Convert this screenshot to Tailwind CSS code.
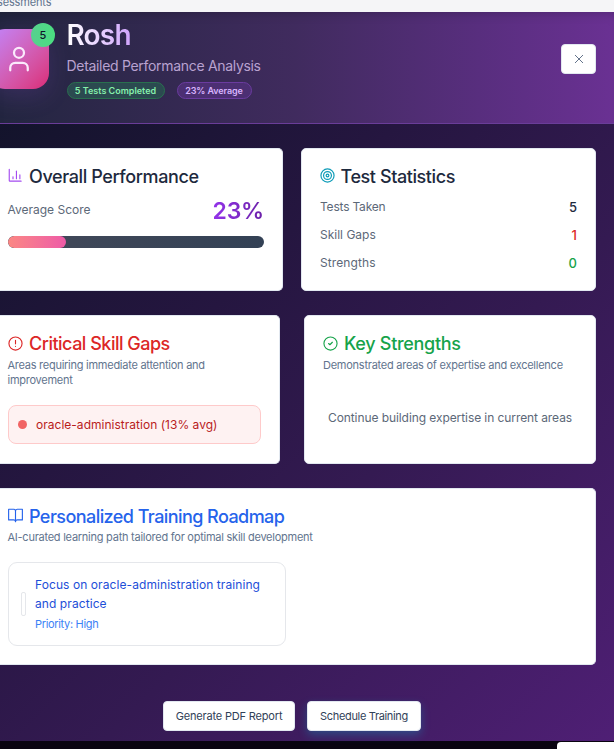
<!DOCTYPE html>
<html lang="en">
<head>
<meta charset="utf-8">
<title>Assessments</title>
<script src="https://cdn.jsdelivr.net/npm/@tailwindcss/browser@4"></script>
</head>
<body class="h-[749px] w-[614px] overflow-hidden bg-[#090410] font-['Inter','Liberation_Sans',sans-serif] whitespace-nowrap">
<div class="h-3 overflow-hidden bg-[#f5f5f7]"><p class="-ml-[3px] -mt-[6px] text-[11px] leading-4 tracking-[-0.15px] text-slate-500">sessments</p></div>
<main class="h-[729px] bg-[linear-gradient(135deg,#0e1326_0%,#251640_38%,#341a52_62%,#4f1f75_100%)]">
  <header class="flex h-28 border-b border-[#6a3d99] bg-[linear-gradient(90deg,#232640_0%,#402b5e_48%,#582e7e_78%,#6a3193_100%)] pr-[18px] shadow-[inset_0_8px_12px_-8px_rgba(0,0,0,0.25)]">
    <div class="relative mt-[17px] -ml-[11px] flex h-[60px] w-[60px] items-center justify-center rounded-2xl bg-gradient-to-br from-[#c084fc] to-[#db2777] shadow-[0_8px_24px_rgba(168,85,247,0.15)]">
      <svg class="-mt-px h-[30px] w-[30px]" viewBox="0 0 24 24" fill="none" stroke="#fbeafc" stroke-width="1.8" stroke-linecap="round" stroke-linejoin="round"><path d="M19 21v-2a4 4 0 0 0-4-4H9a4 4 0 0 0-4 4v2"/><circle cx="12" cy="7" r="4"/></svg>
      <span class="absolute -top-[6px] -right-[6px] flex h-6 w-6 items-center justify-center rounded-full bg-gradient-to-r from-[#57d08f] to-[#4ade80] text-[11px] font-medium text-slate-900">5</span>
    </div>
    <div class="ml-[17.5px] pt-[6px]">
      <h1 class="w-fit bg-gradient-to-r from-white to-[#d0a4fb] bg-clip-text text-[28px] leading-[34px] font-semibold tracking-[-0.8px] text-transparent">Rosh</h1>
      <p class="mt-[5px] text-[14px] leading-[18px] tracking-[-0.31px] text-[#b9a2d0]">Detailed Performance Analysis</p>
      <div class="mt-[7px] flex gap-3 text-[9px] font-semibold">
        <span class="flex h-[17px] w-[98px] items-center justify-center rounded-full border border-[#29704f] bg-[#2b4a50] text-[#86efac]">5 Tests Completed</span>
        <span class="flex h-[17px] w-[75px] items-center justify-center rounded-full border border-[#6b3ba0] bg-[#4c2f73] tracking-[-0.1px] text-[#d8b4fe]">23% Average</span>
      </div>
    </div>
    <button class="mt-8 ml-auto flex h-[30px] w-[35px] items-center justify-center rounded-[4px] border border-slate-200 bg-white"><svg class="h-3 w-3" viewBox="0 0 12 12" fill="none" stroke="#64748b" stroke-width="1"><path d="m2 2 8 8M10 2l-8 8"/></svg></button>
  </header>

  <div class="flex flex-col gap-6 pt-6 pr-[18px]">
    <div class="flex h-[143px] justify-between">
      <section class="w-[283px] rounded-r-[5px] border border-l-0 border-slate-200 bg-white pt-[17px] pr-[18px] pl-2">
        <h2 class="flex items-center gap-[6px] text-[18px] leading-[22px] font-medium tracking-[-0.39px] text-slate-800"><svg class="-mt-[3px] h-[15px] w-[15px] shrink-0" viewBox="0 0 24 24" fill="none" stroke="#a44bf0" stroke-width="1.8" stroke-linecap="round" stroke-linejoin="round"><path d="M2 2v18a1 1 0 0 0 1 1h18"/><path d="M19 17v-6"/><path d="M13.5 17V5"/><path d="M8 17v-3"/></svg>Overall Performance</h2>
        <div class="mt-[8px] flex h-[30px] items-center justify-between"><span class="-ml-[0.5px] -mt-[3px] text-[12px] text-[#5c6878]">Average Score</span><span class="mt-px bg-gradient-to-r from-[#9333ea] to-[#6b21a8] bg-clip-text text-[23px] font-semibold tracking-[-0.2px] text-transparent">23%</span></div>
        <div class="mt-[10px] h-3 overflow-hidden rounded-full bg-gradient-to-r from-[#434959] to-[#334155]"><div class="h-full rounded-full bg-gradient-to-r from-[#fb8783] to-[#ee5aa6]" style="width:22.6%"></div></div>
      </section>
      <section class="w-[295px] rounded-[5px] border border-slate-200 bg-white px-[18px] pt-[17px]">
        <h2 class="flex items-center gap-[5.5px] text-[18px] leading-[22px] font-medium tracking-[-0.42px] text-slate-800"><svg class="-mt-[3px] h-[15px] w-[15px] shrink-0" viewBox="0 0 24 24" fill="none" stroke="#0e9cb8" stroke-width="1.9"><circle cx="12" cy="12" r="10.5"/><circle cx="12" cy="12" r="6.3"/><circle cx="12" cy="12" r="2.2"/></svg>Test Statistics</h2>
        <dl class="mt-[10px] flex flex-col gap-[10px] text-[12px] leading-[18px] text-[#5c6878]">
          <div class="flex justify-between"><dt class="tracking-[-0.2px]">Tests Taken</dt><dd class="text-[13px] font-medium text-slate-800">5</dd></div>
          <div class="flex justify-between"><dt>Skill Gaps</dt><dd class="text-[13px] font-medium text-[#dc2626]">1</dd></div>
          <div class="flex justify-between"><dt class="tracking-[0.1px]">Strengths</dt><dd class="text-[13px] font-medium text-[#16a34a]">0</dd></div>
        </dl>
      </section>
    </div>

    <div class="flex h-[149px] justify-between">
      <section class="w-[280px] rounded-r-[5px] border border-l-0 border-slate-200 bg-white pt-[17px] pr-[18px] pl-2">
        <h2 class="flex items-center gap-[6px] text-[18px] leading-[22px] font-medium tracking-[-0.5px] text-[#dc2626]"><svg class="-mt-px h-[15px] w-[15px] shrink-0" viewBox="0 0 24 24" fill="none" stroke="currentColor" stroke-width="1.8" stroke-linecap="round"><circle cx="12" cy="12" r="10.5"/><path d="M12 7v5.5M12 16.5h.01"/></svg>Critical Skill Gaps</h2>
        <p class="-ml-[0.5px] mt-[3px] text-[11px] leading-[15px] tracking-[-0.26px] text-slate-500">Areas requiring immediate attention and<br>improvement</p>
        <div class="mt-[17px] flex h-[39px] items-center gap-[9px] rounded-lg border border-[#fecaca] bg-[#fef2f2] pl-[9px]"><i class="h-[9px] w-[9px] rounded-full bg-[#f16464]"></i><span class="text-[12px] tracking-[0.02px] text-[#b91c1c]">oracle-administration (13% avg)</span></div>
      </section>
      <section class="w-[292px] rounded-[5px] border border-slate-200 bg-white px-[18px] pt-[17px]">
        <h2 class="flex items-center gap-[6px] text-[18px] leading-[22px] font-medium tracking-[-0.3px] text-[#16a34a]"><svg class="-mt-px h-[15px] w-[15px] shrink-0" viewBox="0 0 24 24" fill="none" stroke="currentColor" stroke-width="1.8" stroke-linecap="round" stroke-linejoin="round"><circle cx="12" cy="12" r="10.5"/><path d="m9 12 2 2 4-4"/></svg>Key Strengths</h2>
        <p class="mt-[3px] text-[11px] leading-[15px] tracking-[-0.25px] text-slate-500">Demonstrated areas of expertise and excellence</p>
        <p class="mt-9 text-center text-[12px] leading-[18px] tracking-[-0.08px] text-[#5c6878]">Continue building expertise in current areas</p>
      </section>
    </div>

    <section class="h-[177px] rounded-r-[5px] border border-l-0 border-slate-200 bg-white pt-[17px] pl-2">
      <h2 class="flex items-center gap-[6px] text-[18px] leading-[22px] font-medium tracking-[-0.56px] text-[#2563eb]"><svg class="-mt-[3px] h-[15px] w-[15px] shrink-0" viewBox="0 0 24 24" fill="none" stroke="currentColor" stroke-width="1.8" stroke-linecap="round" stroke-linejoin="round"><path d="M12 5v17M1 2h8a3 3 0 0 1 3 3 3 3 0 0 1 3-3h8v17h-8a3 3 0 0 0-3 3 3 3 0 0 0-3-3H1z"/></svg>Personalized Training Roadmap</h2>
      <p class="-ml-[0.5px] mt-[2px] text-[11px] leading-[15px] tracking-[-0.25px] text-slate-500">AI-curated learning path tailored for optimal skill development</p>
      <div class="mt-[17px] flex h-[84px] w-[278px] items-center gap-[9px] rounded-[9px] border border-gray-200 pl-3">
        <i class="h-6 w-[5px] rounded-[2px] border border-gray-200"></i>
        <div class="-mt-[2px]"><p class="text-[12px] leading-[19px] tracking-[0.08px] text-[#1d4ed8]">Focus on oracle-administration training<br>and practice</p><p class="mt-1 text-[11px] leading-[15px] tracking-[-0.33px] text-[#3b82f6]">Priority: High</p></div>
      </div>
    </section>
  </div>

  <div class="mt-9 ml-[163px] flex gap-3 text-[11px] text-slate-700">
    <button class="h-[30px] w-[132px] rounded-[4px] border border-slate-200 bg-white tracking-[-0.17px]">Generate PDF Report</button>
    <button class="h-[30px] w-[114px] rounded-[4px] border border-slate-200 bg-white tracking-[-0.33px] shadow-[0_4px_10px_rgba(6,182,212,0.3)]">Schedule Training</button>
  </div>
</main>
<div class="mt-px ml-auto h-[7px] w-[57px] rounded-tl-[4px] bg-white"></div>
</body>
</html>
